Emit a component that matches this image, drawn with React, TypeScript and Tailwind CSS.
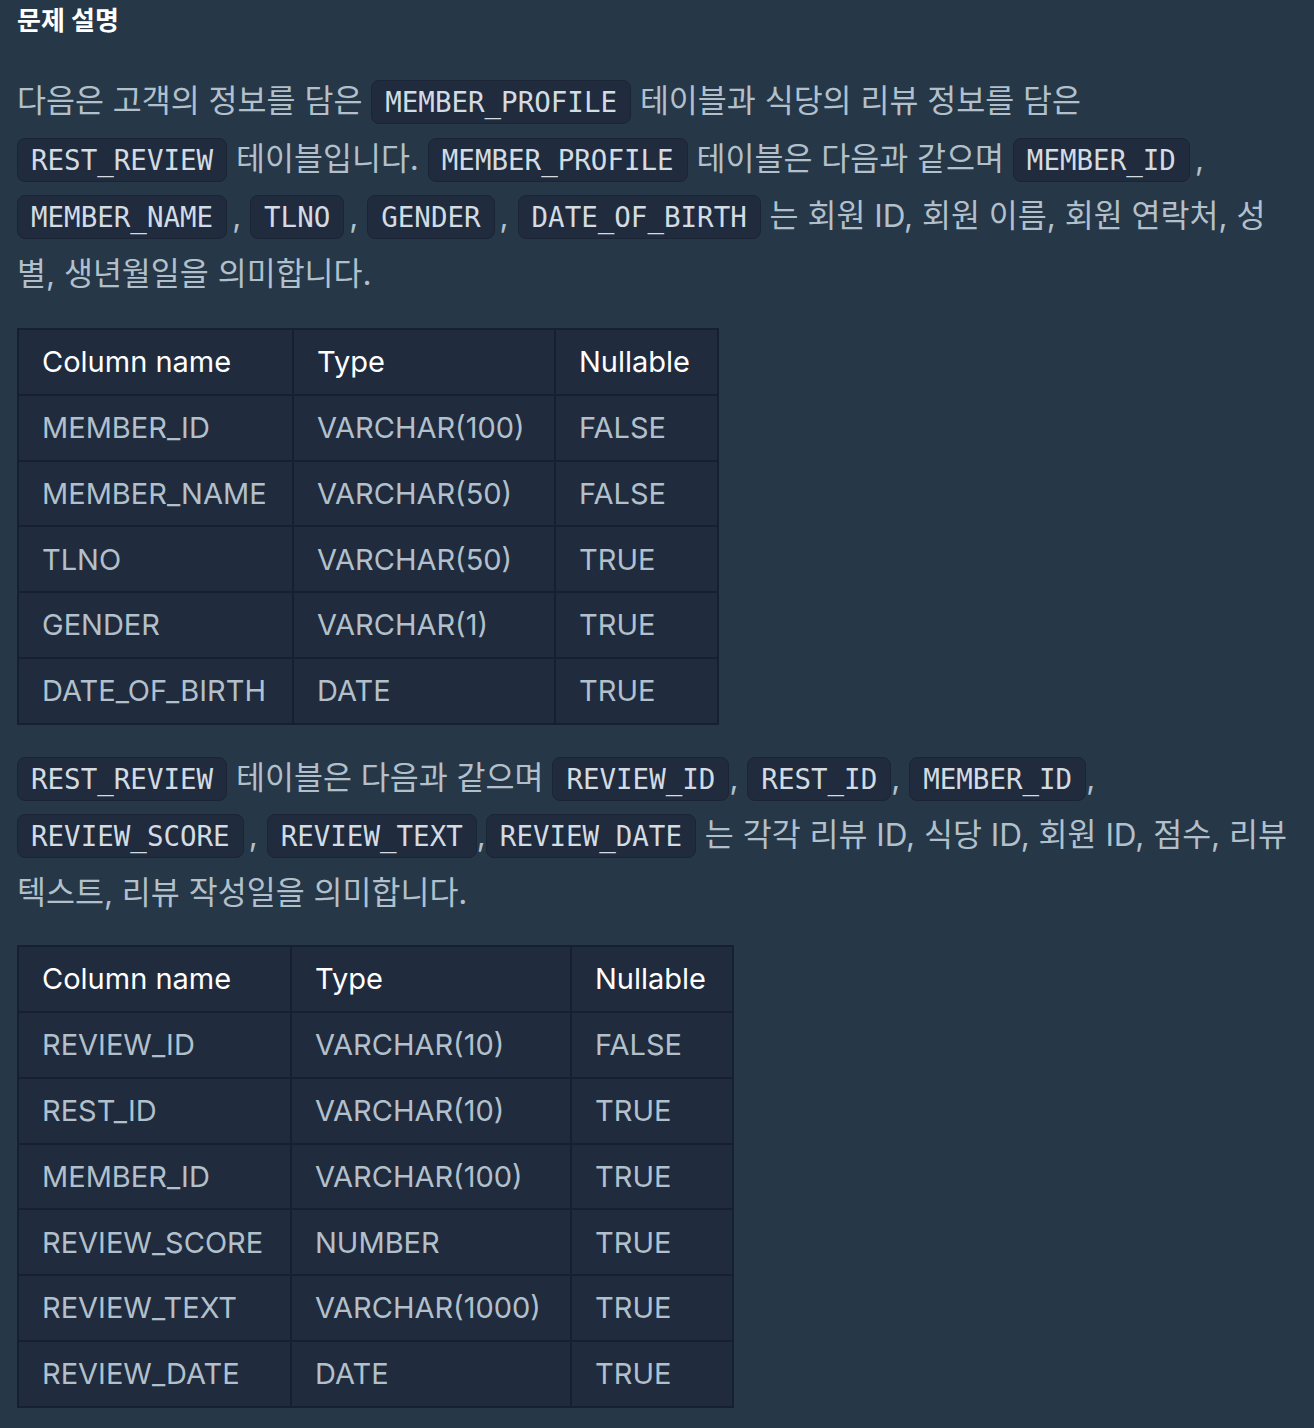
import type { ReactNode } from "react";

type Row = [string, string, string];

const memberRows: Row[] = [
  ["MEMBER_ID", "VARCHAR(100)", "FALSE"],
  ["MEMBER_NAME", "VARCHAR(50)", "FALSE"],
  ["TLNO", "VARCHAR(50)", "TRUE"],
  ["GENDER", "VARCHAR(1)", "TRUE"],
  ["DATE_OF_BIRTH", "DATE", "TRUE"],
];

const reviewRows: Row[] = [
  ["REVIEW_ID", "VARCHAR(10)", "FALSE"],
  ["REST_ID", "VARCHAR(10)", "TRUE"],
  ["MEMBER_ID", "VARCHAR(100)", "TRUE"],
  ["REVIEW_SCORE", "NUMBER", "TRUE"],
  ["REVIEW_TEXT", "VARCHAR(1000)", "TRUE"],
  ["REVIEW_DATE", "DATE", "TRUE"],
];

function Code({ children }: { children: ReactNode }) {
  return (
    <code className="inline-block rounded-lg border border-[#1b2434] bg-[#202b3d] px-[13px] py-[4px] font-['DejaVu_Sans_Mono',monospace] text-[27.5px] leading-[34px] text-[#d3dbe3]">
      {children}
    </code>
  );
}

// comma that sits close between two code chips
const Comma = () => <span className="ml-[5px]">,</span>;

function SchemaTable({ rows, widths }: { rows: Row[]; widths: [string, string, string] }) {
  const cell = "h-[65.8px] border-2 border-[#172030] pl-[23px] pr-2 align-middle";
  return (
    <table className="table-fixed border-collapse bg-[#202b3d] text-[29px] font-['Inter','Noto_Sans_CJK_KR',sans-serif]">
      <colgroup>
        <col className={widths[0]} />
        <col className={widths[1]} />
        <col className={widths[2]} />
      </colgroup>
      <thead>
        <tr className="text-white">
          <th className={`${cell} text-left font-normal`}>Column name</th>
          <th className={`${cell} text-left font-normal`}>Type</th>
          <th className={`${cell} text-left font-normal`}>Nullable</th>
        </tr>
      </thead>
      <tbody className="text-[#b2c0cc]">
        {rows.map((r) => (
          <tr key={r[0]}>
            <td className={cell}>{r[0]}</td>
            <td className={cell}>{r[1]}</td>
            <td className={cell}>{r[2]}</td>
          </tr>
        ))}
      </tbody>
    </table>
  );
}

export default function App() {
  return (
    <div className="min-h-screen bg-[#263747] pl-[17px] pr-[22px] font-['Inter','Noto_Sans_CJK_KR',sans-serif]">
      <h2 className="h-[40px] pt-[2px] text-[26px] font-bold leading-[38px] text-white">문제 설명</h2>

      <p className="mt-[32px] text-[31.5px] leading-[57.5px] text-[#b2c0cc]">
        다음은 고객의 정보를 담은 <Code>MEMBER_PROFILE</Code> 테이블과 식당의 리뷰 정보를 담은{" "}
        <Code>REST_REVIEW</Code> 테이블입니다. <Code>MEMBER_PROFILE</Code> 테이블은 다음과 같으며{" "}
        <Code>MEMBER_ID</Code>
        <Comma /> <Code>MEMBER_NAME</Code>
        <Comma /> <Code>TLNO</Code>
        <Comma /> <Code>GENDER</Code>
        <Comma /> <Code>DATE_OF_BIRTH</Code> 는 회원 ID, 회원 이름, 회원 연락처, 성별, 생년월일을
        의미합니다.
      </p>

      <div className="mt-[26px]">
        <SchemaTable rows={memberRows} widths={["w-[275px]", "w-[262px]", "w-[163px]"]} />
      </div>

      <p className="mt-[24px] text-[31.5px] leading-[57.5px] text-[#b2c0cc]">
        <Code>REST_REVIEW</Code> 테이블은 다음과 같으며 <Code>REVIEW_ID</Code>, <Code>REST_ID</Code>,{" "}
        <Code>MEMBER_ID</Code>, <Code>REVIEW_SCORE</Code>
        <Comma /> <Code>REVIEW_TEXT</Code>,<Code>REVIEW_DATE</Code> 는 각각 리뷰 ID, 식당 ID, 회원 ID,
        점수, 리뷰 텍스트, 리뷰 작성일을 의미합니다.
      </p>

      <div className="mt-[24px] pb-[18px]">
        <SchemaTable rows={reviewRows} widths={["w-[273px]", "w-[280px]", "w-[162px]"]} />
      </div>
    </div>
  );
}
